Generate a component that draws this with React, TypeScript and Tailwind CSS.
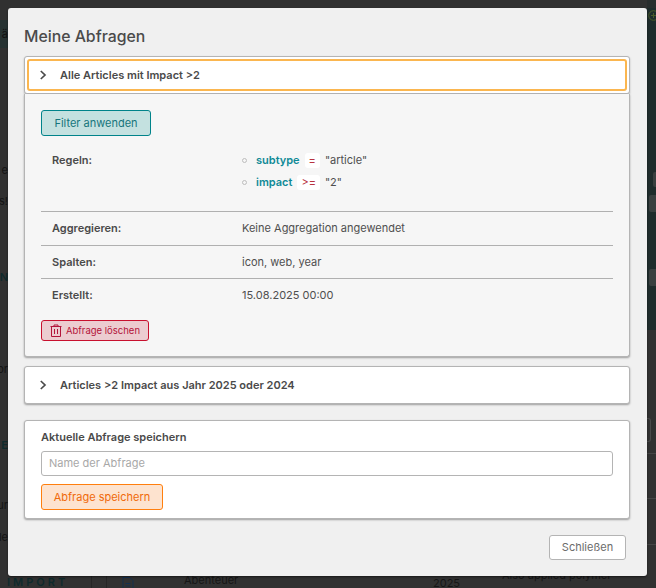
function Chevron() {
  return (
    <svg width="8" height="10" viewBox="0 0 8 10" fill="none" stroke="#4b4b4b" strokeWidth="1.7" className="shrink-0">
      <path d="M1.8 1 L6 5 L1.8 9" />
    </svg>
  );
}

function Trash() {
  return (
    <svg width="12" height="13" viewBox="0 0 12 13" fill="none" stroke="#b3143a" strokeWidth="1" className="shrink-0">
      <path d="M0.5 2.5 H11.5 M4 2.5 V1 H8 V2.5 M1.5 2.5 V12.5 H10.5 V2.5 M4.5 5 V10 M7.5 5 V10" />
    </svg>
  );
}

function Row({ label, value, last }: { label: string; value: string; last?: boolean }) {
  return (
    <div className={"flex items-center h-[33.5px] px-[11px] " + (last ? "pb-[2px]" : "border-b border-[#b0b0b0]")}>
      <div className="w-[190px] font-semibold text-[#4a4a4a]">{label}</div>
      <div className="text-[#4f4f4f]">{value}</div>
    </div>
  );
}

function Rule({ field, op, value }: { field: string; op: string; value: string }) {
  return (
    <div className="flex items-center h-[22px]">
      <span className="w-[5px] h-[5px] rounded-full border border-[#bdbdbd] mr-2"></span>
      <span className="font-semibold text-[#0f8a96] ml-[1px]">{field}</span>
      <span className="mx-[5px] px-[4px] h-[15px] flex items-center rounded-[3px] bg-white text-[#b8323f]">{op}</span>
      <span className="text-[#4f4f4f]">{value}</span>
    </div>
  );
}

function Sliver({ text, className }: { text: string; className: string }) {
  return <div className={"h-[14px] flex items-center justify-end whitespace-nowrap " + className}>{text}</div>;
}

function Backdrop() {
  return (
    <div className="w-full h-full flex flex-col">
      <div className="h-[576px] flex justify-between">
        <div className="w-[8px] overflow-hidden flex flex-col text-[#141414]">
          <div className="mt-[20px] h-[28px] bg-[#263232] flex items-center justify-end text-[#111]">ä</div>
          <Sliver text="e" className="mt-[115px]" />
          <Sliver text="s!" className="mt-[17px]" />
          <Sliver text="N" className="mt-[62px] text-[#0f2a2c] font-semibold" />
          <Sliver text="or" className="mt-[78px]" />
          <Sliver text="E" className="mt-[62px] text-[#0f2a2c] font-semibold justify-center" />
          <Sliver text="ur" className="mt-[46px]" />
          <Sliver text="lle" className="mt-[18px]" />
        </div>
        <div className="w-[9px] flex flex-col">
          <div className="h-[8px] bg-[#282d2d]"></div>
          <div className="h-[322px] bg-[#1f2c2c] flex flex-col items-end">
            <svg className="mt-[2px] self-start ml-[1px]" width="11" height="11" viewBox="0 0 11 11" fill="none" stroke="#4a5a2a" strokeWidth="1">
              <circle cx="5.5" cy="5.5" r="4.8" />
              <path d="M5.5 3 V8 M3 5.5 H8" />
            </svg>
            <div className="mt-[151px] w-[3px] h-[15px] rounded-l-[2px] bg-[#3a4040]"></div>
            <div className="mt-[8px] w-[7px] h-[17px] rounded-l-[2px] bg-[#3a4040]"></div>
            <div className="mt-[57px] w-[7px] h-[17px] rounded-l-[2px] bg-[#3a4040]"></div>
          </div>
          <div className="mt-[88px] w-[4px] h-[24px] border border-l-0 border-[#4a4a4a] rounded-r-[3px]"></div>
          <div className="mt-[11px] h-px bg-[#454545]"></div>
          <div className="mt-[44px] h-px bg-[#454545]"></div>
          <div className="mt-[45px] h-px bg-[#454545]"></div>
        </div>
      </div>
      <div className="h-[12px] flex items-start text-[#161616]">
        <div className="w-[91px] pl-[7px] mt-[-2px] text-[#0f2a2c] tracking-[3px] font-semibold">IMPORT</div>
        <div className="w-[16px] h-full border-x border-[#262626]"></div>
        <svg className="ml-[15px] mt-[1px]" width="12" height="11" viewBox="0 0 12 11" fill="none" stroke="#14304f" strokeWidth="1">
          <path d="M1 11 V0.5 H8 L11 3.5 V11 M3.5 6.5 H8.5 M3.5 9 H8.5" />
        </svg>
        <div className="ml-[50px] w-[249px] mt-[-4px]">Abenteuer</div>
        <div className="mt-[-1px] w-[69px]">2025</div>
        <div className="mt-[-9px] whitespace-nowrap">Also applied polymer</div>
      </div>
    </div>
  );
}

export default function App() {
  return (
    <div className="relative w-[656px] h-[588px] overflow-hidden bg-[#313131] font-['Inter','Liberation_Sans',sans-serif] text-[11px]">
      <Backdrop />

      <div className="absolute left-[8px] top-[8px] w-[639px] h-[568px] rounded-[3px] bg-[#f0f0f0] shadow-[0_1px_2px_rgba(0,0,0,0.5)] pl-4 pr-[17px] flex flex-col">
        <h1 className="mt-[20px] h-[18px] flex items-center text-[15.8px] font-medium text-[#4a4a4a]">Meine Abfragen</h1>
        <div className="mt-[10px] h-[38px] rounded-[3px] border border-[#b4b4b4] bg-white p-[2px] shadow-[0_1px_2px_rgba(0,0,0,0.25)]">
          <div className="h-full rounded-[3px] border-2 border-[#fbb64f] flex items-center pl-[10px] gap-[13px] font-semibold text-[#4a4a4a]">
            <Chevron />
            Alle Articles mit Impact &gt;2
          </div>
        </div>
        <div className="h-[263px] rounded-b-[3px] border border-t-0 border-[#b4b4b4] bg-[#f6f6f6] px-4 pt-[16px] shadow-[0_1px_2px_rgba(0,0,0,0.35)]">
          <button className="h-[26px] w-[110px] rounded-[3px] border border-[#00838a] bg-[#c4e1e0] text-[#17757c] text-[11px]">Filter anwenden</button>
          <div className="flex px-[11px] mt-[13px] h-[63px] border-b border-[#b0b0b0]">
            <div className="w-[190px] font-semibold text-[#4a4a4a] pt-[2px] leading-[18px]">Regeln:</div>
            <div>
              <Rule field="subtype" op="=" value={'"article"'} />
              <Rule field="impact" op=">=" value={'"2"'} />
            </div>
          </div>
          <Row label="Aggregieren:" value="Keine Aggregation angewendet" />
          <Row label="Spalten:" value="icon, web, year" />
          <Row label="Erstellt:" value="15.08.2025 00:00" last />
          <button className="mt-[7px] h-[21px] w-[108px] flex items-center justify-center gap-[4px] rounded-[3px] border border-[#c8102e] bg-[#ecccd0] text-[#b3143a] text-[9.5px] leading-[19px] pt-[1px]">
            <Trash />
            Abfrage löschen
          </button>
        </div>
        <div className="mt-[9px] h-[38px] rounded-[3px] border border-[#b4b4b4] bg-white flex items-center pl-[14px] gap-[13px] font-semibold text-[#4a4a4a] shadow-[0_1px_2px_rgba(0,0,0,0.35)]">
          <Chevron />
          Articles &gt;2 Impact aus Jahr 2025 oder 2024
        </div>
        <div className="mt-[16px] h-[99px] rounded-[3px] border border-[#b4b4b4] bg-white px-4 pt-[10px] shadow-[0_1px_2px_rgba(0,0,0,0.35)]">
          <div className="h-[13px] flex items-center font-semibold text-[#4a4a4a]">Aktuelle Abfrage speichern</div>
          <input placeholder="Name der Abfrage" className="mt-[7px] block w-full h-[25px] rounded-[3px] border border-[#b4b4b4] bg-white px-[7px] pb-[2px] text-[11px] placeholder:text-[#a8a8a8] outline-none" />
          <button className="mt-[8px] h-[26px] w-[122px] rounded-[3px] border border-[#ff7f0e] bg-[#fde3cf] text-[#f06a0a] text-[11px] pt-[1px]">Abfrage speichern</button>
        </div>
        <div className="flex justify-end mt-[16px] pr-[4px]">
          <button className="h-[25px] w-[77px] rounded-[3px] border border-[#b4b4b4] bg-white text-[#6b6b6b] text-[11px]">Schließen</button>
        </div>
      </div>
    </div>
  );
}
